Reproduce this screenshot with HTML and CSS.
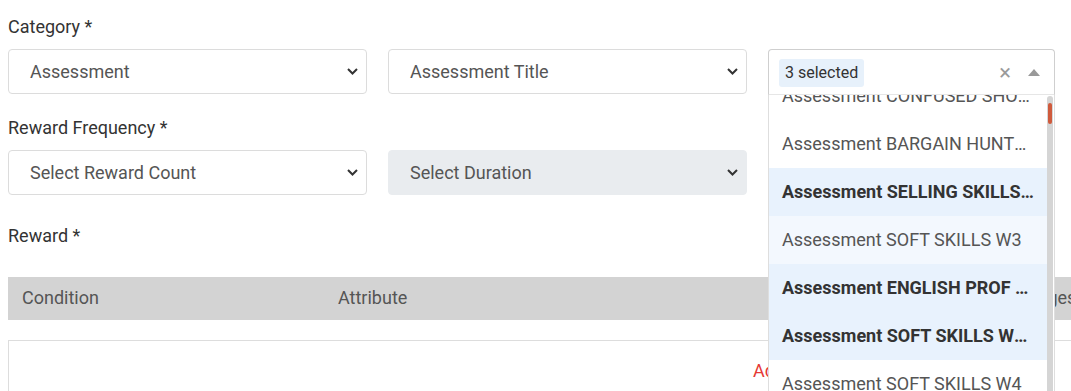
FILE: index.html
```html
<!DOCTYPE html>
<html>
<head>
    <meta charset="utf-8">
    <meta name="viewport" content="width=device-width, initial-scale=1">
    <title>Reward Rule</title>
    <link rel="stylesheet" href="styles.css">
</head>
<body>
    <div class="field-label">Category *</div>
    <div class="field-row">
        <div class="select-box">
            <span>Assessment</span>
            <svg class="chevron" width="11" height="7" viewBox="0 0 11 7"><path d="M1 1l4.5 4.5L10 1" fill="none" stroke="#333" stroke-width="2"/></svg>
        </div>
        <div class="select-box">
            <span>Assessment Title</span>
            <svg class="chevron" width="11" height="7" viewBox="0 0 11 7"><path d="M1 1l4.5 4.5L10 1" fill="none" stroke="#333" stroke-width="2"/></svg>
        </div>
        <div class="multi-select">
            <div class="multi-control">
                <span class="chip">3 selected</span>
                <span class="clear-btn">×</span>
                <svg class="caret" width="12" height="7" viewBox="0 0 12 7"><path d="M0 7L6 0l6 7z" fill="#999"/></svg>
            </div>
            <div class="dropdown">
                <div class="option-list">
                    <div class="option-scroll">
                        <div class="option">Assessment CONFUSED SHOPPER W1</div>
                        <div class="option">Assessment BARGAIN HUNTER W1</div>
                        <div class="option selected">Assessment SELLING SKILLS W2</div>
                        <div class="option hovered">Assessment SOFT SKILLS W3</div>
                        <div class="option selected">Assessment ENGLISH PROF W2</div>
                        <div class="option selected">Assessment SOFT SKILLS W2 PART</div>
                        <div class="option">Assessment SOFT SKILLS W4</div>
                    </div>
                </div>
                <div class="scroll-track">
                    <div class="scroll-thumb"></div>
                </div>
            </div>
        </div>
    </div>

    <div class="field-label">Reward Frequency *</div>
    <div class="field-row">
        <div class="select-box">
            <span>Select Reward Count</span>
            <svg class="chevron" width="11" height="7" viewBox="0 0 11 7"><path d="M1 1l4.5 4.5L10 1" fill="none" stroke="#333" stroke-width="2"/></svg>
        </div>
        <div class="select-box disabled">
            <span>Select Duration</span>
            <svg class="chevron" width="11" height="7" viewBox="0 0 11 7"><path d="M1 1l4.5 4.5L10 1" fill="none" stroke="#333" stroke-width="2"/></svg>
        </div>
    </div>

    <div class="field-label reward-label">Reward *</div>
    <div class="table-head">
        <div>Condition</div>
        <div>Attribute</div>
        <div>Images</div>
    </div>
    <div class="table-body">
        <span class="add-link">Add Condition</span>
    </div>
</body>
</html>
```

FILE: styles.css
```css
:root {
    --label-color: #333333;
    --text-color: #555555;
    --border: #dcdcdc;
    --selected-bg: #e8f2fd;
    --hover-bg: #f3f8fe;
}

* {
    margin: 0;
    padding: 0;
    box-sizing: border-box;
}

body {
    font-family: Roboto, 'Liberation Sans', sans-serif;
    background: #ffffff;
    padding: 16px 8px 0;
    overflow: hidden;
    height: 391px;
}

.field-label {
    font-size: 18px;
    line-height: 22px;
    color: var(--label-color);
    margin-bottom: 11px;
}

.field-row {
    display: grid;
    grid-template-columns: 359px 359px 287px;
    column-gap: 21px;
    align-items: start;
    margin-bottom: 22px;
}

.select-box {
    height: 45px;
    border: 1px solid var(--border);
    border-radius: 4px;
    display: flex;
    align-items: center;
    justify-content: space-between;
    padding: 0 8px 0 21px;
    font-size: 18px;
    color: var(--text-color);
}

.select-box.disabled {
    background: #e9ecef;
    border-color: #e9ecef;
}

.chevron {
    display: block;
}

/* multi select with open list */
.multi-select {
    position: relative;
    z-index: 5;
}

.multi-control {
    height: 46px;
    border: 1px solid #cfcfcf;
    border-bottom-color: #e6e6e6;
    border-radius: 4px 4px 0 0;
    display: flex;
    align-items: center;
    padding: 1px 14px 0 10px;
}

.chip {
    background: #e7f1fb;
    border-radius: 3px;
    font-size: 16px;
    line-height: 28px;
    padding: 0 6px;
    color: var(--label-color);
}

.clear-btn {
    margin-left: auto;
    margin-right: 17px;
    font-size: 22px;
    color: #9a9a9a;
    line-height: 1;
}

.caret {
    display: block;
}

.dropdown {
    position: absolute;
    top: 46px;
    left: 0;
    width: 287px;
    height: 320px;
    background: #ffffff;
    border-left: 1px solid #dedede;
    border-right: 1px solid #dedede;
    display: flex;
}

.option-list {
    flex: 1;
    overflow: hidden;
}

.option-scroll {
    margin-top: -23px;
}

.option {
    height: 48px;
    line-height: 48px;
    padding: 0 11px 0 13px;
    font-size: 18px;
    color: var(--text-color);
    white-space: nowrap;
    overflow: hidden;
    text-overflow: ellipsis;
}

.option.selected {
    background: var(--selected-bg);
    font-weight: 700;
    color: #333333;
}

.option.hovered {
    background: var(--hover-bg);
}

.scroll-track {
    width: 6px;
    margin: 1px 1px 0 0;
    background: #d5d5d5;
    border-radius: 3px 3px 0 0;
    padding-top: 7px;
}

.scroll-thumb {
    width: 4px;
    height: 21px;
    margin-left: 1px;
    background: #cf5a3c;
    border-radius: 2px;
}

/* reward table */
.reward-label {
    margin-top: 30px;
    margin-bottom: 30px;
}

.table-head {
    width: 1100px;
    height: 43px;
    background: #d3d3d3;
    display: grid;
    grid-template-columns: 316px 679px auto;
    align-items: center;
    padding: 0 0 3px 14px;
    font-size: 18px;
    color: var(--text-color);
}

.table-body {
    width: 1100px;
    height: 70px;
    margin-top: 20px;
    border: 1px solid #dddddd;
    padding: 19px 0 0 744px;
    font-size: 18px;
}

.add-link {
    color: #e53935;
}
```
